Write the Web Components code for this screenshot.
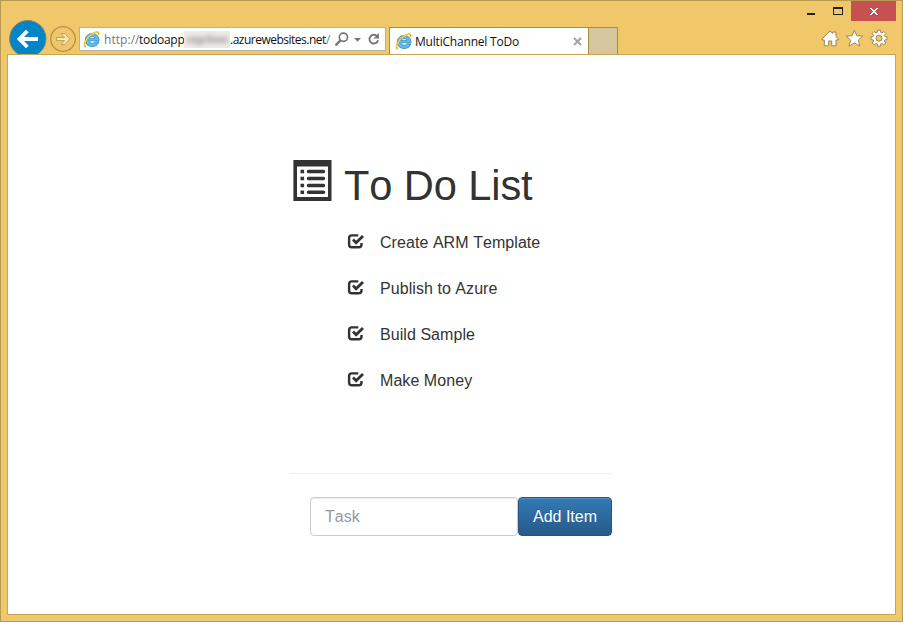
<!DOCTYPE html>
<html lang="en">
<head>
<meta charset="utf-8">
<title>MultiChannel ToDo</title>
<style>
html,body{margin:0;height:100%}
body{overflow:hidden}
</style>
</head>
<body>
<browser-window>
  <window-controls slot="controls"></window-controls>
  <nav-buttons slot="bar"></nav-buttons>
  <address-bar slot="bar"></address-bar>
  <browser-tab slot="bar">MultiChannel ToDo</browser-tab>
  <tool-icons slot="bar"></tool-icons>
  <todo-page>
    <todo-item>Create ARM Template</todo-item>
    <todo-item>Publish to Azure</todo-item>
    <todo-item>Build Sample</todo-item>
    <todo-item>Make Money</todo-item>
    <task-form slot="form"></task-form>
  </todo-page>
</browser-window>
<script>
const define = (name, html) => customElements.define(name, class extends HTMLElement {
  constructor() {
    super();
    const t = document.createElement('template');
    t.innerHTML = html;
    this.attachShadow({ mode: 'open' }).append(t.content.cloneNode(true));
  }
});

define('browser-window', `
<style>
:host{display:flex;flex-direction:column;box-sizing:border-box;width:903px;height:622px;border:1px solid #b89a52;background:#f0c869;padding:0 6px 6px}
.caption{height:20px;display:flex;justify-content:flex-end}
.bar{height:34px;display:flex;align-items:flex-start;overflow:hidden;box-sizing:border-box;margin-top:-1px}
.view{flex:1;background:#fff;border:1px solid #c9a654;box-sizing:border-box;display:flex}
</style>
<div class="caption"><slot name="controls"></slot></div>
<div class="bar"><slot name="bar"></slot></div>
<div class="view"><slot></slot></div>
<slot name="form"></slot>`);

define('window-controls', `
<style>
:host{display:flex;width:96px;height:20px}
svg{display:block}
</style>
<svg width="96" height="20" viewBox="800 1 96 20" shape-rendering="crispEdges">
<rect x="807" y="13" width="8" height="2" fill="#222"/>
<path d="M833 7h10v8h-10zM834 9v5h8V9z" fill="#222" fill-rule="evenodd"/>
<rect x="851" y="1" width="45" height="20" fill="#c75050"/>
<path d="M870 8h2v1h1v1h2V9h1V8h2v1h-1v1h-1v1h-1v1h1v1h1v1h1v1h-2v-1h-1v-1h-2v1h-1v1h-2v-1h1v-1h1v-1h1v-1h-1v-1h-1V9h-1z" fill="#fff"/>
</svg>`);

define('nav-buttons', `
<style>:host{display:block;width:72px;height:34px;flex:none}svg{display:block}</style>
<svg width="72" height="34" viewBox="7 20 72 34">
<circle cx="27.8" cy="38.7" r="18.2" fill="#0386c8" stroke="#8d8358" stroke-width="1"/>
<path d="M38 39H20M27.3 31L19.5 39l7.8 8" fill="none" stroke="#fff" stroke-width="3.8"/>
<circle cx="63" cy="39" r="12.3" fill="#efc66a" stroke="#b3914a" stroke-width="1.3"/>
<path d="M56.5 37.5h8.2l-3.6-4h3.6l5 5.5-5 5.6h-3.6l3.6-4h-8.2z" fill="#fae9bb" stroke="#bd9c50" stroke-width=".9"/>
</svg>`);

define('ie-logo', `
<style>:host{display:block;width:17px;height:17px;flex:none}svg{display:block}</style>
<svg width="17" height="17" viewBox="0 0 17 17">
<path d="M15.8 10.9h-4.2c-.4 1-1.3 1.4-2.5 1.4-1.7 0-2.8-1-2.9-2.5H16C16.2 5.6 13.5 2.6 9.2 2.6 5 2.6 2.3 5.3 2.3 9s2.7 6.5 6.8 6.5c3.4 0 5.9-1.7 6.7-4.6zM6.3 7.4c.2-1.3 1.3-2 2.8-2s2.6.7 2.7 2z" fill="#5bbdf0" stroke="#2b86c0" stroke-width=".8" fill-rule="evenodd"/>
<path d="M4.4 5.6C6 4 8.2 3.5 10.6 3.9" stroke="#a5def7" fill="none"/>
<path d="M2.9 15.6C.8 15.8 1 12 3.8 8 7 3.6 12.4.4 14.7 1.2c1 .4 1.1 1.5.6 2.8" fill="none" stroke="#e9b11c" stroke-width="1.7"/>
<path d="M2 14.8C1.2 13.6 2 11 4 8.1 7.1 3.9 12 .9 14.4 1.4" fill="none" stroke="#ffd945" stroke-width="1"/>
</svg>`);

define('address-bar', `
<style>
:host{display:flex;align-items:center;box-sizing:border-box;width:307px;height:24px;margin-top:7px;border:1px solid #b5b1a8;background:#fff;padding-left:3px;font:12px/24px "Open Sans","Noto Sans",sans-serif;color:#111;flex:none}
.p{white-space:nowrap;flex:none;height:22px}
.g{color:#777;width:35px;margin-left:4px;letter-spacing:.05px}
.h{width:45px;letter-spacing:-.28px}
.d{width:96px;letter-spacing:-.5px}
.s{width:8px;color:#777}
.blur{width:46px;height:17px;flex:none;overflow:hidden;background:#eeece8;display:block}
svg{display:block;flex:none}
</style>
<ie-logo></ie-logo><span class="p g">http://</span><span class="p h">todoapp</span>
<svg class="blur" width="46" height="17" viewBox="0 0 46 17"><defs><filter id="f" x="-20%" y="-50%" width="140%" height="200%"><feGaussianBlur stdDeviation="2.4"/></filter></defs><g filter="url(#f)" fill="#bbb"><rect x="3" y="6" width="18" height="6"/><rect x="12" y="7" width="7" height="7"/><rect x="22" y="4" width="5" height="8"/><rect x="27" y="6" width="17" height="6"/></g></svg>
<span class="p d">.azurewebsites.net</span><span class="p s">/</span>
<svg width="50" height="22" viewBox="334 28 50 22" fill="none" stroke="#777">
<circle cx="343.4" cy="37.3" r="4.1" stroke-width="1.7"/><path d="M340.5 40.4l-5 5" stroke-width="2.3"/>
<path d="M354 38h7l-3.5 3.7z" fill="#777" stroke="none"/>
<path d="M377.3 36.4a4.4 4.4 0 1 0 .8 3.9" stroke-width="1.9"/><path d="M379 33v5.5h-5.5z" fill="#777" stroke="none"/>
</svg>`);

define('browser-tab', `
<style>
:host{display:flex;margin:7px 0 0 3px;height:27px;flex:none}
.tab{display:flex;align-items:center;box-sizing:border-box;width:200px;height:27px;border:1px solid #aa8c47;border-bottom:0;background:#fff;padding:0 6px 0 5px;font:12px/28px "Open Sans","Noto Sans",sans-serif;color:#111}
.t{margin-left:3px;flex:1;white-space:nowrap;letter-spacing:-.2px;height:26px}
.new{box-sizing:border-box;width:29px;height:27px;background:#d6c69e;border:1px solid #aa8c47;border-left:0;border-bottom:0}
svg{display:block}
</style>
<div class="tab"><ie-logo></ie-logo><span class="t"><slot></slot></span><svg width="9" height="9" viewBox="0 0 9 9"><path d="M1 1l7 7M8 1L1 8" stroke="#a3a3a3" stroke-width="2"/></svg></div><div class="new"></div>`);

define('tool-icons', `
<style>:host{display:block;margin-left:auto;padding-top:8px;height:20px}svg{display:block}</style>
<svg width="76" height="20" viewBox="820 28 76 20" fill="#fff" stroke="#a08550" stroke-width="1" stroke-linejoin="round">
<path d="M830 31l2.6 2.4V32h3.4v4.6l2.3 2.4v1H836v5.8h-4.3V41h-3v4.8h-4.4V40H822v-1z"/>
<path d="M854.4 30.3l2.4 5.4 6 .4-4.5 4 1.6 6-5.5-3.2-5.4 3.2 1.6-6-4.6-4 6-.4z"/>
<g transform="translate(879 38.2)"><path fill-rule="evenodd" d="M-1.5-8h3l.3 2.3 1.1.5 1.9-1.5 2 2-1.5 1.9.5 1.1 2.2.3v2.8l-2.2.3-.5 1.1 1.5 1.9-2 2-1.9-1.5-1.1.5-.3 2.3h-3l-.3-2.3-1.1-.5-1.9 1.5-2-2 1.5-1.9-.5-1.1-2.2-.3v-2.8l2.2-.3.5-1.1-1.5-1.9 2-2 1.9 1.5 1.1-.5z"/><circle r="3" fill="#f0c869"/></g>
</svg>`);

define('todo-page', `
<style>
:host{display:flex;flex-direction:column;width:322px;margin-left:282px;padding-top:105px;color:#333;font-family:"Liberation Sans",Arial,sans-serif;font-kerning:none}
header{display:flex;height:59px;padding-left:3px}
h1{font-weight:400;font-size:41.6px;line-height:46px;margin:3px 0 0 12px;white-space:nowrap;letter-spacing:-.1px}
svg{display:block;flex:none}
.list{display:flex;flex-direction:column;height:254px;padding-left:57px}
</style>
<header><svg width="39" height="42" viewBox="293 160 39 42" fill="#333">
<path fill-rule="evenodd" d="M293.4 160h38.1v41h-38.1zM297 166.5V197h31v-30.5z"/>
<path d="M300.5 169.8h3.6v3.5h-3.6zm0 7h3.6v3.5h-3.6zm0 7h3.6v3.5h-3.6zm0 6.8h3.6v3.5h-3.6z"/>
<path d="M308.5 169.8h15a1.75 1.75 0 0 1 0 3.5h-15a1.75 1.75 0 0 1 0-3.5zm0 7h15a1.75 1.75 0 0 1 0 3.5h-15a1.75 1.75 0 0 1 0-3.5zm0 7h15a1.75 1.75 0 0 1 0 3.5h-15a1.75 1.75 0 0 1 0-3.5zm0 6.8h15a1.75 1.75 0 0 1 0 3.5h-15a1.75 1.75 0 0 1 0-3.5z"/>
</svg><h1>To Do List</h1></header>
<div class="list"><slot></slot></div>
<slot name="form"></slot>`);

define('todo-item', `
<style>
:host{display:flex;height:46px;align-items:center;font-size:16px;line-height:22px}
svg{display:block;margin:-2px 15px 0 0}
span{padding-top:2px;letter-spacing:.06px}
</style>
<svg width="18" height="17" viewBox="0 0 18 17" fill="none" stroke="#333">
<path d="M11.3 2.4H4.8C2.9 2.4 2.1 3.3 2.1 5v6.6c0 1.8.8 2.7 2.7 2.7h7c1.9 0 2.7-.9 2.7-2.7V10" stroke-width="2.4"/>
<path d="M6 6.6l3.1 3.1L16 2.9" stroke-width="2.8"/>
</svg><span><slot></slot></span>`);

define('task-form', `
<style>
:host{display:flex;border-top:1px solid #eee;padding:23px 0 0 20px}
input,button{box-sizing:border-box;height:39px;font:16px/22px "Liberation Sans",Arial,sans-serif;font-kerning:none;border-radius:4px;margin:0}
input{width:208px;border:1px solid #ccc;padding:0 14px;box-shadow:inset 0 1px 1px rgba(0,0,0,.075);background:#fff;outline:0}
input::placeholder{color:#999;opacity:1}
button{width:94px;padding:0;border:1px solid #245580;background:linear-gradient(#337ab7,#265a88);color:#fff;text-shadow:0 -1px 0 rgba(0,0,0,.2);box-shadow:inset 0 1px 0 rgba(255,255,255,.15)}
</style>
<input type="text" placeholder="Task"><button>Add Item</button>`);
</script>
</body>
</html>
